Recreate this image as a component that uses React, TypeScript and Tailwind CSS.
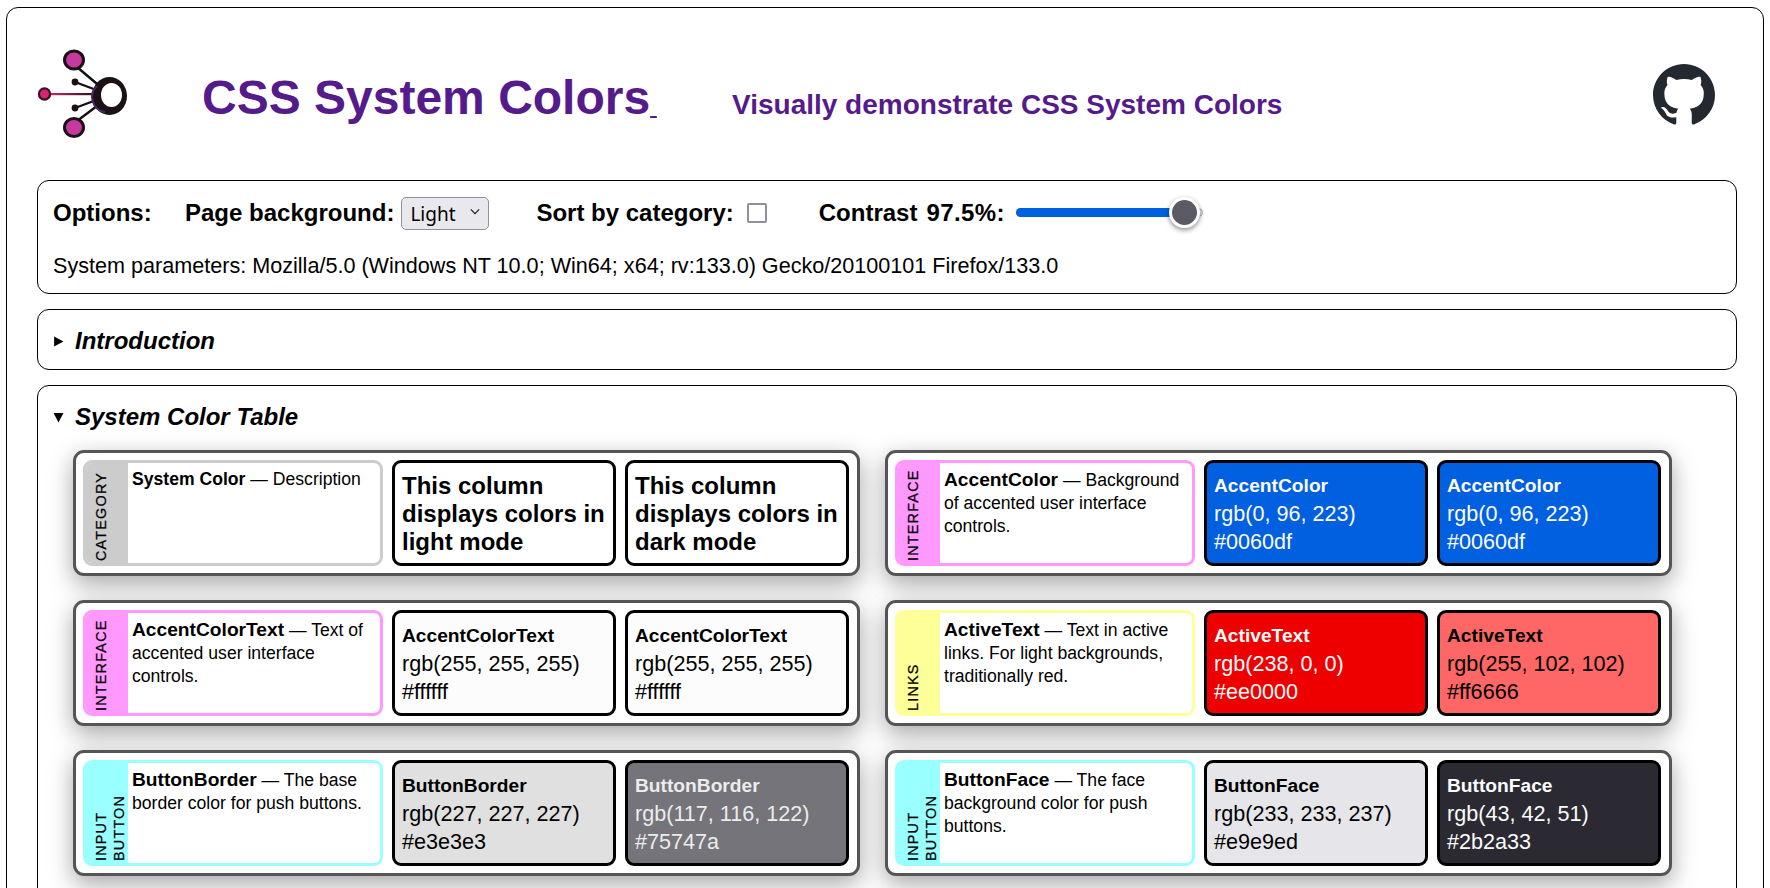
/**
 * CSS System Colors demo page: header, options panel and the colour table.
 */
import { useState } from "react";

interface ColorRow {
  name: string;
  desc: string;
  tag: string[];
  tagClass: string;
  borderClass: string;
  light: { rgb: string; hex: string; bg: string; fg: string };
  dark: { rgb: string; hex: string; bg: string; fg: string };
}

const INTERFACE = { tag: ["Interface"], tagClass: "bg-[#ff99ff]", borderClass: "border-[#ff99ff]" };
const LINKS = { tag: ["Links"], tagClass: "bg-[#ffff99]", borderClass: "border-[#ffff99]" };
const BUTTON = { tag: ["Input", "Button"], tagClass: "bg-[#99ffff]", borderClass: "border-[#99ffff]" };

const rows: ColorRow[] = [
  {
    ...INTERFACE,
    name: "AccentColor",
    desc: "Background of accented user interface controls.",
    light: { rgb: "rgb(0, 96, 223)", hex: "#0060df", bg: "#0060df", fg: "#fcfcfc" },
    dark: { rgb: "rgb(0, 96, 223)", hex: "#0060df", bg: "#0060df", fg: "#fcfcfc" },
  },
  {
    ...INTERFACE,
    name: "AccentColorText",
    desc: "Text of accented user interface controls.",
    light: { rgb: "rgb(255, 255, 255)", hex: "#ffffff", bg: "#fcfcfc", fg: "#000000" },
    dark: { rgb: "rgb(255, 255, 255)", hex: "#ffffff", bg: "#fcfcfc", fg: "#000000" },
  },
  {
    ...LINKS,
    name: "ActiveText",
    desc: "Text in active links. For light backgrounds, traditionally red.",
    light: { rgb: "rgb(238, 0, 0)", hex: "#ee0000", bg: "#ee0000", fg: "#fcfcfc" },
    dark: { rgb: "rgb(255, 102, 102)", hex: "#ff6666", bg: "#ff6666", fg: "#000000" },
  },
  {
    ...BUTTON,
    name: "ButtonBorder",
    desc: "The base border color for push buttons.",
    light: { rgb: "rgb(227, 227, 227)", hex: "#e3e3e3", bg: "#e0e0e0", fg: "#000000" },
    dark: { rgb: "rgb(117, 116, 122)", hex: "#75747a", bg: "#75747a", fg: "#ececec" },
  },
  {
    ...BUTTON,
    name: "ButtonFace",
    desc: "The face background color for push buttons.",
    light: { rgb: "rgb(233, 233, 237)", hex: "#e9e9ed", bg: "#e6e6ea", fg: "#000000" },
    dark: { rgb: "rgb(43, 42, 51)", hex: "#2b2a33", bg: "#2b2a33", fg: "#fcfcfc" },
  },
];

function Logo() {
  return (
    <svg viewBox="0 0 92 94" className="w-[92px] h-[94px] shrink-0">
      <defs>
        <linearGradient id="wire" x1="0" x2="1" y1="0" y2="0">
          <stop offset="0" stopColor="#d6246e" />
          <stop offset="1" stopColor="#111111" />
        </linearGradient>
      </defs>
      <path d="M40 20 L66 42 M40 74 L64 56 M38 35 L62 44 M38 61 L62 52" stroke="#111111" strokeWidth="2.4" fill="none" />
      <rect x="12" y="46" width="50" height="2.2" fill="url(#wire)" />
      <ellipse cx="37" cy="13" rx="9.5" ry="9" fill="#c43a9e" stroke="#1a1016" strokeWidth="3" />
      <ellipse cx="37" cy="80.5" rx="9.5" ry="9" fill="#c43a9e" stroke="#1a1016" strokeWidth="3" />
      <circle cx="7.5" cy="47" r="5.6" fill="#d6246e" stroke="#3a1024" strokeWidth="2.2" />
      <circle cx="38" cy="35" r="3.4" fill="#1a1016" />
      <circle cx="38" cy="61" r="3.4" fill="#1a1016" />
      <ellipse cx="72.5" cy="49" rx="17.5" ry="19" fill="#1a1016" />
      <path d="M60 39 A15 15 0 0 0 68 65" stroke="#4a2a66" strokeWidth="2" fill="none" />
      <ellipse cx="74.5" cy="48" rx="10.5" ry="12" fill="#ffffff" />
    </svg>
  );
}

function GithubMark() {
  return (
    <svg viewBox="0 0 16 16" className="w-[62px] h-[62px]" fill="#24292f">
      <path d="M8 0C3.58 0 0 3.58 0 8c0 3.54 2.29 6.53 5.47 7.59.4.07.55-.17.55-.38 0-.19-.01-.82-.01-1.49-2.01.37-2.53-.49-2.69-.94-.09-.23-.48-.94-.82-1.13-.28-.15-.68-.52-.01-.53.63-.01 1.08.58 1.23.82.72 1.21 1.87.87 2.33.66.07-.52.28-.87.51-1.07-1.78-.2-3.64-.89-3.64-3.95 0-.87.31-1.59.82-2.15-.08-.2-.36-1.02.08-2.12 0 0 .67-.21 2.2.82.64-.18 1.32-.27 2-.27.68 0 1.36.09 2 .27 1.53-1.04 2.2-.82 2.2-.82.44 1.1.16 1.92.08 2.12.51.56.82 1.27.82 2.15 0 3.07-1.87 3.75-3.65 3.95.29.25.54.73.54 1.48 0 1.07-.01 1.93-.01 2.2 0 .21.15.46.55.38A8.013 8.013 0 0016 8c0-4.42-3.58-8-8-8z" />
    </svg>
  );
}

function Tag({ lines, className }: { lines: string[]; className: string }) {
  return (
    <div className={`w-[45px] shrink-0 -my-[3px] -ml-[3px] pl-[9px] pb-[5px] pt-[3px] flex ${className}`}>
      <div className="[writing-mode:vertical-rl] rotate-180 uppercase text-[14.4px] leading-[18px] tracking-[1.2px] text-black [-webkit-text-stroke:0.25px_black]">
        {lines.map((l) => (
          <div key={l}>{l}</div>
        ))}
      </div>
    </div>
  );
}

function Swatch({ bg, fg, children }: { bg: string; fg: string; children: React.ReactNode }) {
  return (
    <div
      className="w-[224px] shrink-0 border-[3px] border-black rounded-[9px] px-[7px] pt-[2px] flex flex-col justify-center leading-[28px]"
      style={{ backgroundColor: bg, color: fg }}
    >
      {children}
    </div>
  );
}

function SwatchValue({ name, rgb, hex }: { name: string; rgb: string; hex: string }) {
  return (
    <>
      <div className="font-bold text-[19.2px]">{name}</div>
      <div className="text-[21.6px]">{rgb}</div>
      <div className="text-[21.6px]">{hex}</div>
    </>
  );
}

function Card({ children }: { children: React.ReactNode }) {
  return (
    <div className="h-[126px] border-[3px] border-[#555555] rounded-[11px] bg-white p-[7px] flex gap-[9px] shadow-[0_8px_24px_rgba(0,0,0,0.35)]">
      {children}
    </div>
  );
}

function RowCard({ row }: { row: ColorRow }) {
  return (
    <Card>
      <div className={`w-[300px] shrink-0 border-[3px] rounded-[9px] flex overflow-hidden ${row.borderClass}`}>
        <Tag lines={row.tag} className={row.tagClass} />
        <div className="pl-[4px] pr-[2px] pt-[5px] text-[17.6px] leading-[23px] text-black">
          <b className="text-[19.2px]">{row.name}</b> — {row.desc}
        </div>
      </div>
      <Swatch bg={row.light.bg} fg={row.light.fg}>
        <SwatchValue name={row.name} rgb={row.light.rgb} hex={row.light.hex} />
      </Swatch>
      <Swatch bg={row.dark.bg} fg={row.dark.fg}>
        <SwatchValue name={row.name} rgb={row.dark.rgb} hex={row.dark.hex} />
      </Swatch>
    </Card>
  );
}

function HeaderCard() {
  const column = (mode: string) => (
    <Swatch bg="#ffffff" fg="#000000">
      <div className="font-bold text-[24px]">This column displays colors in {mode} mode</div>
    </Swatch>
  );
  return (
    <Card>
      <div className="w-[300px] shrink-0 border-[3px] border-[#cccccc] rounded-[9px] flex overflow-hidden">
        <Tag lines={["Category"]} className="bg-[#cccccc]" />
        <div className="pl-[4px] pt-[5px] text-[17.6px] leading-[23px] text-black">
          <b>System Color</b> — Description
        </div>
      </div>
      {column("light")}
      {column("dark")}
    </Card>
  );
}

function ContrastSlider() {
  return (
    <div className="relative w-[187px] h-[9px] rounded-full bg-[#e3e3e3] border border-[#b0b0b0]">
      <div className="w-[168px] -mt-px -ml-px h-[9px] rounded-l-full bg-[#0060df]" />
      <div className="absolute left-[152px] top-[-12px] w-[31px] h-[31px] rounded-full bg-[#5b5b66] border-[3px] border-white shadow-[0_2px_5px_rgba(0,0,0,0.45)]" />
    </div>
  );
}

export default function App() {
  const [background, setBackground] = useState("Light");

  return (
    <div className="h-[888px] overflow-hidden bg-white pt-[7px] px-[6px] font-['Liberation_Sans',Arial,sans-serif] text-black">
      <div className="h-[900px] border border-black rounded-[12px] pl-[30px] pr-[26px]">
        <header className="h-[172px] flex items-center">
          <div className="w-[165px] shrink-0">
            <Logo />
          </div>
          <h1 className="w-[530px] shrink-0 mt-[15px] text-[48px] leading-[56px] font-bold text-[#551a8b]">
            CSS System Colors<span className="underline text-[24px] whitespace-pre"> </span>
          </h1>
          <p className="mt-[22px] text-[28px] font-bold text-[#551a8b]">Visually demonstrate CSS System Colors</p>
          <div className="ml-auto mr-[22px] mt-[2px]">
            <GithubMark />
          </div>
        </header>

        <section className="h-[114px] border border-black rounded-[12px] px-[15px] pt-[14px]">
          <div className="flex items-center h-[35px] text-[24px] font-bold">
            <span className="w-[132px]">Options:</span>
            <span>Page background:</span>
            <div className="relative ml-[7px] mr-[47px]">
              <select
                value={background}
                onChange={(e) => setBackground(e.target.value)}
                className="appearance-none w-[88px] h-[33px] pl-[8px] rounded-[5px] border border-[#8f8f9d] bg-[#e9e9ed] font-['Noto_Sans',sans-serif] font-normal text-[19px] leading-[28px]"
              >
                <option>Light</option>
                <option>Dark</option>
              </select>
              <svg viewBox="0 0 12 8" className="absolute right-[9px] top-[13px] w-[10px] h-[7px]" fill="none" stroke="#1a1a1a" strokeWidth="1.4">
                <path d="M1 1.5 L6 6.5 L11 1.5" />
              </svg>
            </div>
            <span>Sort by category:</span>
            <span className="ml-[13px] mr-[52px] w-[20px] h-[20px] shrink-0 rounded-[2px] border-2 border-[#8f8f9d] bg-white" />
            <span>Contrast</span>
            <span className="ml-[9px] mr-[11px] tracking-[0.4px]">97.5%:</span>
            <ContrastSlider />
          </div>
          <p className="mt-[22px] text-[21.6px] leading-[28px]">
            System parameters: Mozilla/5.0 (Windows NT 10.0; Win64; x64; rv:133.0) Gecko/20100101 Firefox/133.0
          </p>
        </section>

        <section className="mt-[15px] h-[61px] border border-black rounded-[12px] px-[15px] pt-[3px] flex items-center gap-[11px] text-[24px] font-bold italic">
          <svg viewBox="0 0 10 10" className="w-[11px] h-[11px]" fill="#000000">
            <path d="M1 0.5 L9.5 5 L1 9.5 Z" />
          </svg>
          Introduction
        </section>

        <section className="mt-[15px] border border-black rounded-[12px] px-[15px] pt-[15px]">
          <div className="flex items-center h-[32px] gap-[11px] text-[24px] font-bold italic">
            <svg viewBox="0 0 10 10" className="w-[11px] h-[11px]" fill="#000000">
              <path d="M0.5 1 L9.5 1 L5 9.5 Z" />
            </svg>
            System Color Table
          </div>
          <div className="mt-[17px] ml-[20px] grid grid-cols-[787px_787px] gap-x-[25px] gap-y-[24px] pb-[40px]">
            <HeaderCard />
            {rows.map((row) => (
              <RowCard key={row.name} row={row} />
            ))}
          </div>
        </section>
      </div>
    </div>
  );
}
